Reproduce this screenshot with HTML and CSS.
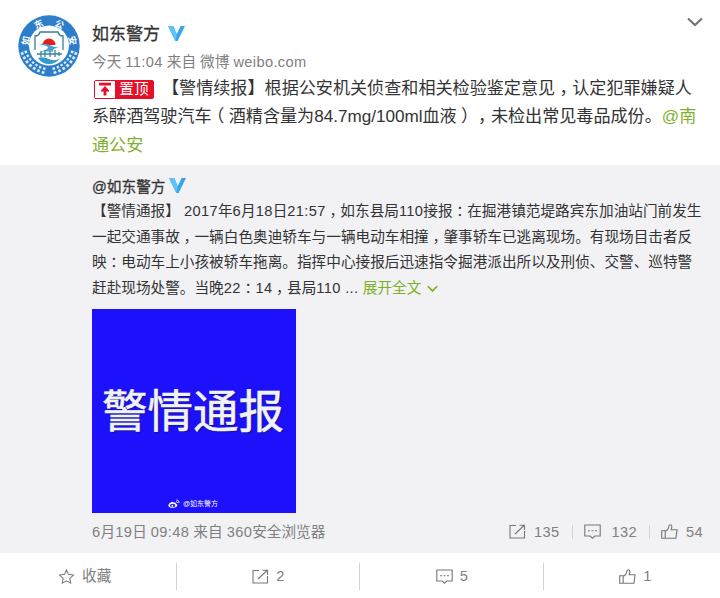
FILE: index.html
```html
<!DOCTYPE html>
<html lang="zh-CN">
  <head>
    <meta charset="UTF-8" />
    <meta name="viewport" content="width=device-width, initial-scale=1.0" />
    <title>如东警方的微博</title>
    <link rel="stylesheet" href="styles.css" />
  </head>
  <body>
    <!-- shared icons -->
    <svg class="defs" width="0" height="0">
      <symbol id="v" viewBox="0 0 17 15">
        <path d="M0 0h5.200l3.500 8.200L12.600 0H17L9.600 15H7.400z" fill="#35a5ee" />
        <path d="M0 0h5.200l3.500 8.200-1.300 6.800z" fill="#5cc3fb" />
      </symbol>
      <symbol id="forward" viewBox="0 0 17 15">
        <path d="M7 1.500H1v12.500h14.500V7M6 10l9-8.500M10.500 1.200h5v4.800" />
      </symbol>
      <symbol id="comment" viewBox="0 0 17 15">
        <path d="M.8 1h15.400v11h-5.400l-2.300 2.200L6.200 12H.8z" />
        <path d="M4 6.800h2m1.500 0h2m1.500 0h2" />
      </symbol>
      <symbol id="like" viewBox="0 0 17 15">
        <path d="M.7 6.800h3.500v7.500H.7zM4.200 7.200c2-.6 3.300-2.500 3.700-5.100C8.200.3 10.600.4 10.800 2.200c.1 1.200-.2 2.300-.6 3.500h5.900l-1.200 8.600H4.200" />
      </symbol>
      <symbol id="star" viewBox="0 0 17 16">
        <path d="M8.500 1l2.200 4.700 5.200.7-3.800 3.600.9 5.100-4.500-2.400L4 15.100l.9-5.100L1.100 6.400l5.200-.7z" />
      </symbol>
    </svg>

    <div class="card">
      <div class="post">
        <svg class="avatar" viewBox="0 0 62 62">
          <circle cx="31" cy="31" r="30.700" fill="#2c7ecb" />
          <g fill="#fff" class="ring-text">
            <text transform="translate(7.500 25.500) rotate(-78)" y="3.500">如</text>
            <text transform="translate(20.500 9) rotate(-26)" y="3.500">东</text>
            <text transform="translate(41.500 9) rotate(26)" y="3.500">公</text>
            <text transform="translate(54.500 25.500) rotate(78)" y="3.500">安</text>
          </g>
          <g fill="none" stroke="#dcecf9">
            <path d="M5.500 36.500C9.500 47 16 53 27 56M56.500 36.500C52.500 47 46 53 35 56" stroke-width="6.500" stroke-dasharray="2.600 2" />
            <path d="M5.500 36.500C9.500 47 16 53 27 56M56.500 36.500C52.500 47 46 53 35 56" stroke="#2c7ecb" stroke-width="1.300" />
          </g>
          <circle cx="31" cy="30.500" r="20" fill="#fff" />
          <path d="M17 35V21q4 0 5-4h18q1 4 5 4v14" fill="none" stroke="#3a7b9c" stroke-width="1.300" />
          <path d="M24.500 30a6.500 6.500 0 0 1 13 0z" fill="#e91c1f" />
          <path d="M20 29q9-1 13 1.500t10 1q-9 2-8 5H23q7-2 7-4t-10-3.500z" fill="#4ba2cc" />
          <path d="M19 39h25M23 36v6m4-7v7m5-6v6m5-7v7m4-5v4" stroke="#38839e" stroke-width="1.300" />
          <path d="M20 43q5-2 11 1t11-1q-4 6-11 6t-11-6z" fill="#309acb" />
        </svg>
        <div class="detail">
          <div class="head">
            <span class="name">如东警方</span>
            <svg class="verified"><use href="#v" /></svg>
            <svg class="more" viewBox="0 0 16 10">
              <path d="M1 1.500l7 6.500 7-6.500" />
            </svg>
          </div>
          <div class="from">今天 <span class="num">11:04</span> 来自 微博 <span class="num">weibo.com</span></div>
          <div class="text">
            <div class="line">
              <span class="top-badge">
                <svg viewBox="0 0 20 16">
                  <path d="M4 2.500h12M6 9.500L10 5l4 4.500z" fill="#e60f28" />
                  <path d="M4 2.700h12M10 7v7" />
                </svg>
                <b>置顶</b>
              </span>
              <span>【警情续报】根据公安机关侦查和相关检验鉴定意见<i>，</i>认定犯罪嫌疑人</span>
            </div>
            <div class="line">系醉酒驾驶汽车<i>（</i>酒精含量为84.7mg/100ml血液<i>）</i><i>，</i>未检出常见毒品成份。<a>@南</a></div>
            <div class="line"><a>通公安</a></div>
          </div>
        </div>
      </div>

      <div class="repost">
        <div class="head">
          <span class="name">@如东警方</span>
          <svg class="verified"><use href="#v" /></svg>
        </div>
        <div class="text">
          <div class="line">【警情通报】 <span class="num">2017</span>年<span class="num">6</span>月<span class="num">18</span>日<span class="num">21:57</span><i>，</i>如东县局<span class="num">110</span>接报<i>：</i>在掘港镇范堤路宾东加油站门前发生</div>
          <div class="line">一起交通事故<i>，</i>一辆白色奥迪轿车与一辆电动车相撞<i>，</i>肇事轿车已逃离现场。有现场目击者反</div>
          <div class="line">映<i>：</i>电动车上小孩被轿车拖离。指挥中心接报后迅速指令掘港派出所以及刑侦、交警、巡特警</div>
          <div class="line">赶赴现场处警。当晚<span class="num">22</span><i>：</i><span class="num">14</span><i>，</i>县局<span class="num">110 ... </span><a>展开全文 <svg class="unfold" viewBox="0 0 10 7"><path d="M.8 1L5 5.300 9.200 1" /></svg></a></div>
        </div>
        <div class="photo">
          <span class="title">警情通报</span>
          <span class="mark">
            <svg viewBox="0 0 13 10">
              <path d="M5 2.500C2 3 0 5.500.5 7.200 1.500 10 8.500 10 10 7c.5-1.300-.5-2-1.500-2.200 0-1.600-1.300-1.600-2.500-1.200 0-.8-.4-1.100-1-1.100z" fill="#fff" />
              <ellipse cx="5" cy="6.700" rx="3" ry="1.900" fill="#1d10fb" />
              <circle cx="4.700" cy="6.800" r="1.100" fill="#fff" />
              <path d="M9 .8c2-.2 3.300 1.200 2.800 3.200M9 2.500q1.300 0 1.200 1.300" fill="none" stroke="#fff" />
            </svg>
            @如东警方
          </span>
        </div>
        <div class="info">
          <span class="from"><span class="num">6</span>月<span class="num">19</span>日 <span class="num">09:48</span> 来自 <span class="num">360</span>安全浏览器</span>
          <ul class="counts">
            <li><svg class="icon"><use href="#forward" /></svg><span class="num">135</span></li>
            <li class="wide"><svg class="icon"><use href="#comment" /></svg><span class="num">132</span></li>
            <li><svg class="icon"><use href="#like" /></svg><span class="num">54</span></li>
          </ul>
        </div>
      </div>

      <ul class="actions">
        <li><svg class="icon"><use href="#star" /></svg>收藏</li>
        <li><svg class="icon"><use href="#forward" /></svg>2</li>
        <li><svg class="icon"><use href="#comment" /></svg>5</li>
        <li><svg class="icon"><use href="#like" /></svg>1</li>
      </ul>
    </div>
  </body>
</html>
```

FILE: styles.css
```css
body {
  margin: 0;
  background: #fff;
  color: #333;
  font-family: "Liberation Sans", "Noto Sans CJK SC", sans-serif;
  font-size: 14.65px;
  text-spacing-trim: space-all;
  overflow: hidden;
}
ul {
  list-style: none;
  margin: 0;
  padding: 0;
}
a {
  color: #7fb02c;
}
.defs {
  position: absolute;
}
.num {
  letter-spacing: 0.35px;
}
.card {
  width: 720px;
  height: 598px;
  overflow: hidden;
}

/* original post */
.post {
  box-sizing: border-box;
  display: flex;
  height: 165px;
  padding: 15px 17px 0 18px;
}
.avatar {
  flex: none;
  width: 62px;
  height: 62px;
  margin-right: 12px;
}
.ring-text {
  font-size: 9px;
  font-weight: bold;
  text-anchor: middle;
}
.detail {
  flex: 1;
}
.head {
  display: flex;
  align-items: center;
}
.post .head {
  height: 36px;
  font-size: 17px;
}
.name {
  margin-top: -2px;
  -webkit-text-stroke: 0.3px #333;
}
.verified {
  width: 17px;
  height: 15px;
  margin-left: 8px;
}
.more {
  width: 16px;
  height: 10px;
  margin: -22px 0 0 auto;
  fill: none;
  stroke: #73757c;
  stroke-width: 2.2;
}
.from {
  color: #808080;
  line-height: 22px;
}
.line {
  white-space: nowrap;
}
/* half width punctuation centred in a full width cell */
.line i {
  font-style: normal;
  font-feature-settings: "halt";
  padding: 0 0.25em;
}
.post .text {
  padding-top: 2px;
}
.post .line {
  display: flex;
  align-items: center;
  height: 28.4px;
  line-height: 28.4px;
  font-size: 17.1px;
}
.top-badge {
  box-sizing: border-box;
  display: flex;
  width: 60px;
  height: 19px;
  margin: 0 8px 0 2px;
  border: 1px solid #e60f28;
  border-radius: 2px;
  background: #e60f28;
  color: #fff;
}
.top-badge svg {
  width: 20px;
  height: 17px;
  background: #fff;
  fill: none;
  stroke: #e60f28;
  stroke-width: 2.8;
}
.top-badge svg path:first-child {
  stroke-width: 1;
}
.top-badge b {
  flex: 1;
  font-size: 14.65px;
  font-weight: normal;
  line-height: 16px;
  text-align: center;
}

/* quoted post */
.repost {
  box-sizing: border-box;
  height: 388px;
  padding: 8px 17px 0 92px;
  background: #f2f2f5;
}
.repost .head {
  height: 26px;
}
.repost .verified {
  margin: -2px 0 0 4px;
}
.repost .line {
  height: 25.7px;
  line-height: 25.7px;
}
.unfold {
  width: 11px;
  height: 8px;
  margin-left: 2px;
  fill: none;
  stroke: #7fb02c;
  stroke-width: 1.6;
}
.photo {
  box-sizing: border-box;
  display: flex;
  flex-direction: column;
  align-items: center;
  justify-content: space-between;
  width: 204px;
  height: 204px;
  margin-top: 7px;
  padding: 71px 2px 3px 0;
  background: #1d10fb;
  color: #fff;
}
.title {
  color: #f0f2fb;
  font-size: 45.5px;
  line-height: 66px;
  text-shadow: 1px 1px 1px #15155c;
  -webkit-text-stroke: 0.6px #f0f2fb;
}
.mark {
  display: flex;
  align-items: center;
  gap: 3px;
  font-size: 7px;
  line-height: 12px;
}
.mark svg {
  width: 12px;
  height: 10px;
}
.info {
  display: flex;
  justify-content: space-between;
  align-items: center;
  height: 38px;
}
.icon {
  width: 17px;
  height: 15px;
  fill: none;
  stroke: #777;
  stroke-width: 1.1;
}
.counts,
.counts li,
.actions li {
  display: flex;
  align-items: center;
  color: #808080;
}
.counts .icon {
  margin-right: 8px;
}
.counts .wide .icon {
  margin-right: 11px;
}
.counts li + li {
  margin-left: 12px;
  padding-left: 12px;
  background: linear-gradient(#d5d5d9, #d5d5d9) left / 1px 14px no-repeat;
}

/* bottom bar, runs slightly past both edges of the card */
.actions {
  display: grid;
  grid-template-columns: repeat(4, 1fr);
  align-items: center;
  margin: 0 -7px;
  height: 46px;
}
.actions li {
  justify-content: center;
  height: 27px;
  line-height: 20px;
}
.actions li + li {
  box-shadow: -1px 0 #d2d2d5;
}
.actions .icon {
  margin-right: 7px;
}
```
